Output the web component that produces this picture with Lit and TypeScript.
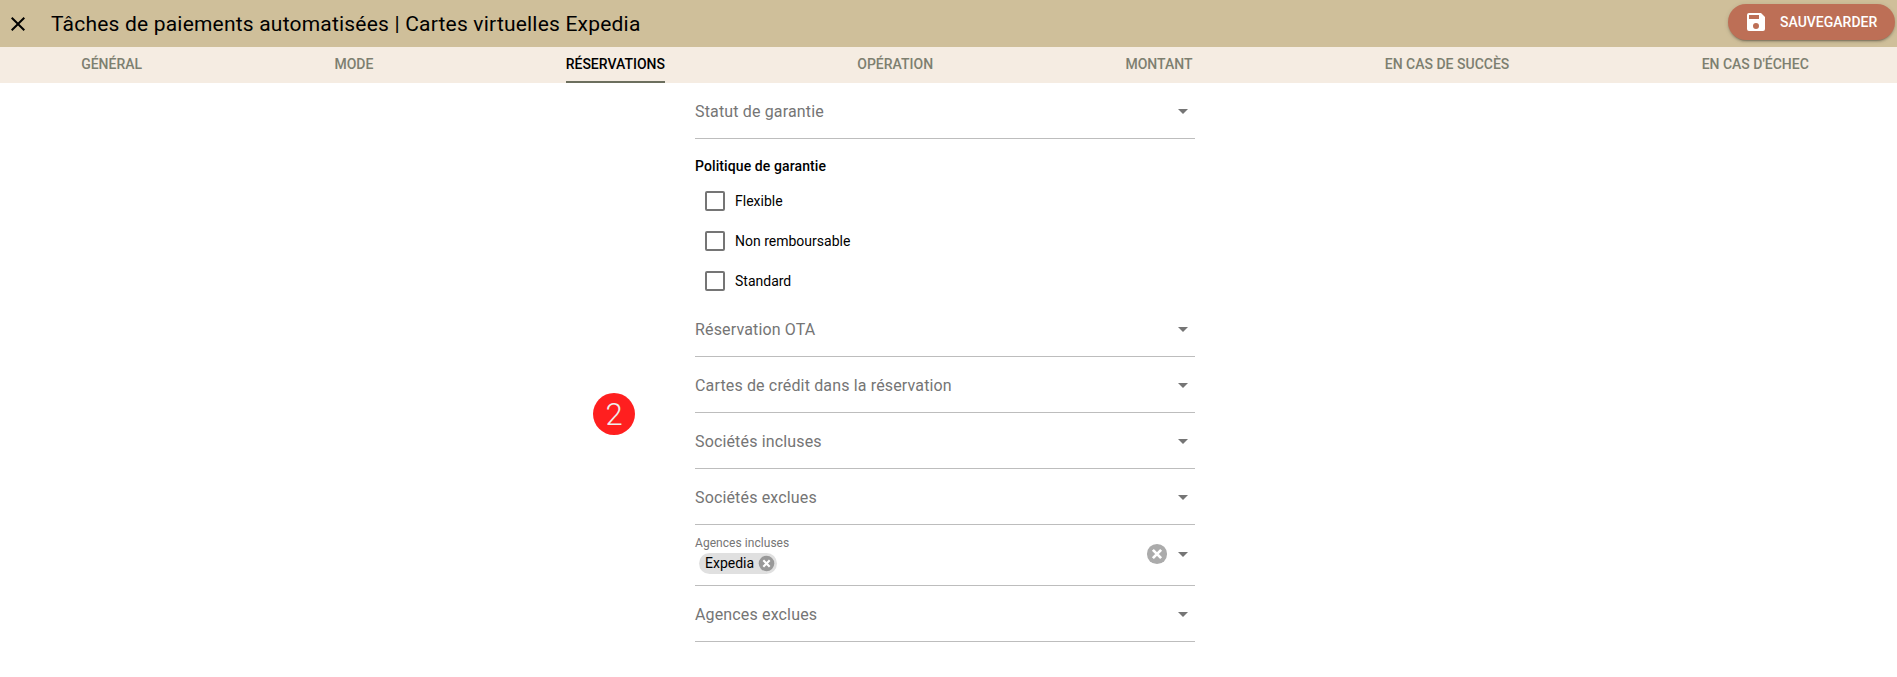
import { LitElement, html, css, svg } from "lit";
import { customElement } from "lit/decorators.js";

const tabs = ["Général", "Mode", "Réservations", "Opération", "Montant", "En cas de succès", "En cas d'échec"];
const arrow = html`<span class="arrow"></span>`;

@customElement("app-root")
export class AppRoot extends LitElement {
  static styles = css`
    :host { display: block; font-family: Roboto, "Liberation Sans", sans-serif; color: #000; background: #fff; position: relative; height: 677px; overflow: hidden; }
    .bar { height: 47px; background: #cfbf9a; display: flex; align-items: center; padding: 0 2px 3px 6px; box-sizing: border-box; }
    .close { width: 24px; height: 24px; margin: 3px 21px 0 0; display: block; }
    .title { font-size: 21px; font-weight: 400; letter-spacing: 0.2px; flex: 1; white-space: nowrap; margin-top: 3px; }
    .save { height: 36px; width: 167px; background: #bd6f56; border-radius: 18px; color: #fff; display: flex; align-items: center; padding-left: 16px; box-sizing: border-box; font-size: 14px; font-weight: 500; text-transform: uppercase; gap: 12px; box-shadow: 0 3px 1px -2px rgba(0,0,0,.2), 0 2px 2px rgba(0,0,0,.14), 0 1px 5px rgba(0,0,0,.12); }
    .save svg { width: 24px; height: 24px; fill: #fff; }
    .tabs { height: 36px; background: #f5ece2; display: flex; margin: 0 -8px 0 -15px; }
    .tab { flex: 1 1 auto; display: flex; justify-content: center; font-size: 14px; font-weight: 500; text-transform: uppercase; color: #7d7f70; }
    .tab span { display: block; box-sizing: border-box; height: 36px; line-height: 34px; }
    .tab.on { color: #000; }
    .tab.on span { border-bottom: 2px solid #6c6f5e; }
    .main { display: flex; justify-content: center; padding-right: 7px; }
    .form { width: 500px; }
    .field { height: 56px; box-sizing: border-box; border-bottom: 1px solid #bdbdbd; display: flex; align-items: center; padding-top: 2px; font-size: 16px; letter-spacing: 0.15px; color: #757575; }
    .lab { flex: 1; }
    .arrow { width: 0; height: 0; border-left: 5px solid transparent; border-right: 5px solid transparent; border-top: 5px solid #757575; margin-right: 7px; }
    .group { padding-top: 19px; height: 162px; box-sizing: border-box; }
    .gtitle { font-size: 14px; font-weight: 500; line-height: 16px; letter-spacing: 0.1px; margin-bottom: 7px; }
    .check { height: 40px; display: flex; align-items: center; font-size: 14px; padding-left: 10px; gap: 10px; color: #000; }
    .box { width: 20px; height: 20px; box-sizing: border-box; border: 2px solid #757575; border-radius: 2px; }
    .tall { height: 61px; padding-top: 0; padding-bottom: 2px; }
    .stack { flex: 1; padding-top: 1px; }
    .small { font-size: 12px; line-height: 14px; letter-spacing: 0.05px; color: #757575; }
    .chip { display: inline-flex; align-items: center; height: 21px; margin: 3px 0 0 4px; padding: 0 2px 0 6px; background: #e0e0e0; border-radius: 11px; font-size: 14px; letter-spacing: 0; color: #000; gap: 4px; }
    .chip svg { width: 17px; height: 17px; display: block; }
    .clear { width: 22px; height: 22px; margin-right: 10px; display: block; }
    .badge { position: absolute; left: 593px; top: 393px; width: 42px; height: 42px; border-radius: 50%; background: #ff1f1f; color: #eeeeee; display: flex; align-items: center; justify-content: center; font-size: 31px; font-weight: 300; }
  `;

  private circleX(fill: string) {
    return svg`<circle cx="12" cy="12" r="11" fill="${fill}"/><path d="M7.5 7.5l9 9M16.5 7.5l-9 9" stroke="#fff" stroke-width="3" fill="none"/>`;
  }

  private sel(label: string) {
    return html`<div class="field"><span class="lab">${label}</span>${arrow}</div>`;
  }

  render() {
    return html`
      <div class="bar">
        <svg class="close" viewBox="0 0 24 24"><path d="M19 6.41 17.59 5 12 10.59 6.41 5 5 6.41 10.59 12 5 17.59 6.41 19 12 13.41 17.59 19 19 17.59 13.41 12z"/></svg>
        <div class="title">Tâches de paiements automatisées | Cartes virtuelles Expedia</div>
        <div class="save">
          <svg viewBox="0 0 24 24"><path d="M17 3H5a2 2 0 0 0-2 2v14a2 2 0 0 0 2 2h14a2 2 0 0 0 2-2V7l-4-4zm-5 16a3 3 0 1 1 0-6 3 3 0 0 1 0 6zm3-10H5V5h10v4z"/></svg>
          Sauvegarder
        </div>
      </div>
      <div class="tabs">
        ${tabs.map((t) => html`<div class="tab ${t === "Réservations" ? "on" : ""}"><span>${t}</span></div>`)}
      </div>
      <div class="main">
        <div class="form">
          ${this.sel("Statut de garantie")}
          <div class="group">
            <div class="gtitle">Politique de garantie</div>
            ${["Flexible", "Non remboursable", "Standard"].map((c) => html`<div class="check"><span class="box"></span>${c}</div>`)}
          </div>
          ${this.sel("Réservation OTA")}
          ${this.sel("Cartes de crédit dans la réservation")}
          ${this.sel("Sociétés incluses")}
          ${this.sel("Sociétés exclues")}
          <div class="field tall">
            <div class="stack">
              <div class="small">Agences incluses</div>
              <div class="chip">Expedia <svg viewBox="0 0 24 24">${this.circleX("#999999")}</svg></div>
            </div>
            <svg class="clear" viewBox="0 0 24 24">${this.circleX("#ababab")}</svg>
            ${arrow}
          </div>
          ${this.sel("Agences exclues")}
        </div>
      </div>
      <div class="badge">2</div>
    `;
  }
}
